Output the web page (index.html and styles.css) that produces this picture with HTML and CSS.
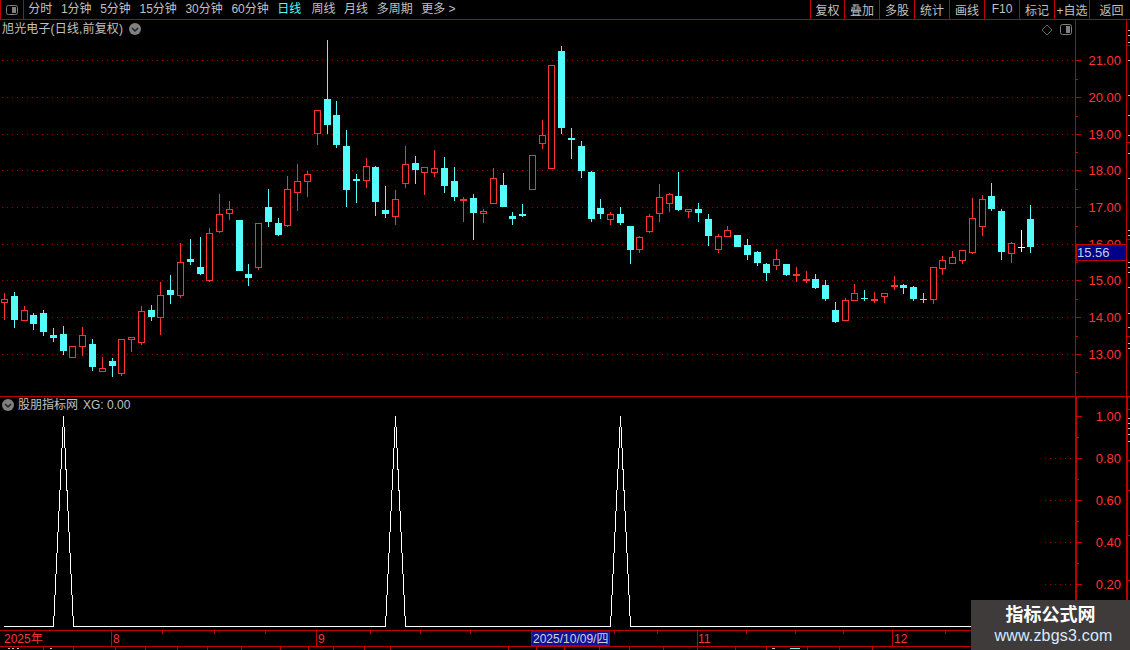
FILE: index.html
```html
<!DOCTYPE html>
<html lang="zh-CN">
<head>
<meta charset="utf-8">
<title>旭光电子 日线</title>
<link rel="stylesheet" href="styles.css">
</head>
<body>
<div class="app">
  <header class="toolbar">
    <div class="tool-icon">
      <svg class="panel-icon" viewBox="0 0 12 10" width="12" height="10"><rect x="0.5" y="0.5" width="11" height="9" rx="2" class="icon-frame"/><rect x="6" y="2" width="4" height="6" class="icon-fill"/></svg>
    </div>
    <nav class="periods">
      <span class="period">分时</span><span class="period">1分钟</span><span class="period">5分钟</span><span class="period">15分钟</span><span class="period">30分钟</span><span class="period">60分钟</span><span class="period active">日线</span><span class="period">周线</span><span class="period">月线</span><span class="period">多周期</span><span class="period">更多 &gt;</span>
    </nav>
    <div class="actions">
      <span class="action first">复权</span><span class="action">叠加</span><span class="action">多股</span><span class="action">统计</span><span class="action">画线</span><span class="action">F10</span><span class="action">标记</span><span class="action">+自选</span><span class="action back">返回</span>
    </div>
  </header>

  <section class="pane price-pane">
    <div class="pane-title price-title">
      <span class="title-text">旭光电子(日线,前复权)</span>
      <svg class="chev" viewBox="0 0 12 12" width="12" height="12"><circle cx="6" cy="6" r="6" class="chev-bg"/><path d="M3 5l3 3 3-3" class="chev-mark"/></svg>
    </div>
    <svg class="chart" viewBox="0 20 1130 376" width="1130" height="376">
      <g class="grid">
        <path d="M2 60.5H1075M2 97.5H1075M2 134.5H1075M2 170.5H1075M2 207.5H1075M2 244.5H1075M2 280.5H1075M2 317.5H1075M2 354.5H1075"/>
      </g>
      <g id="candles"></g>
      <g class="axis">
        <path d="M1075.5 20V396M1126.5 20V396"/>
        <path d="M1076 60.5h5M1076 97.5h5M1076 134.5h5M1076 170.5h5M1076 207.5h5M1076 244.5h5M1076 280.5h5M1076 317.5h5M1076 354.5h5"/>
        <path d="M1076 79.5h2M1076 116.5h2M1076 152.5h2M1076 189.5h2M1076 226.5h2M1076 262.5h2M1076 299.5h2M1076 336.5h2M1076 372.5h2"/>
        <path d="M1127 45.5h3M1127 142.5h3M1127 239.5h3M1127 336.5h3"/>
      </g>
      <path class="strip-ticks" d="M1128 30.500h2M1128 35.500h2M1128 42.500h2M1128 60.500h2M1128 95.500h2M1128 115.500h2M1128 135.500h2M1128 153.500h2M1128 178.500h2M1128 230.500h2M1128 235.500h2M1128 262.500h2M1128 267.500h2M1128 272.500h2M1128 287.500h2M1128 313.500h2M1128 327.500h2M1128 343.500h2M1128 348.500h2"/>
      <g class="labels">
        <text x="1121" y="65">21.00</text>
        <text x="1121" y="102">20.00</text>
        <text x="1121" y="139">19.00</text>
        <text x="1121" y="175">18.00</text>
        <text x="1121" y="212">17.00</text>
        <text x="1121" y="249">16.00</text>
        <text x="1121" y="285">15.00</text>
        <text x="1121" y="322">14.00</text>
        <text x="1121" y="359">13.00</text>
      </g>
      <rect class="tag-bg" x="1076" y="244.500" width="50" height="15.500"/>
      <text class="tag-text" x="1077" y="257">15.56</text>
      <path class="diamond" d="M1047 25l5 5-5 5-5-5z"/>
      <rect class="icon-frame" x="1060.500" y="24.500" width="11" height="10" rx="2"/>
      <rect class="icon-fill" x="1066" y="26" width="4" height="7"/>
    </svg>
  </section>

  <section class="pane ind-pane">
    <div class="pane-title ind-title">
      <svg class="chev" viewBox="0 0 12 12" width="12" height="12"><circle cx="6" cy="6" r="6" class="chev-bg"/><path d="M3 5l3 3 3-3" class="chev-mark"/></svg>
      <span>股朋指标网</span>
      <span>XG: 0.00</span>
    </div>
    <svg class="chart" viewBox="0 397 1130 233" width="1130" height="233">
      <g class="grid">
        <path d="M1045 458.5H1075M1045 500.5H1075M1045 542.5H1075M1045 584.5H1075"/>
      </g>
      <polyline class="signal" points="4,626.500 53.500,626.500 63.500,416.500 73.500,626.500 385.500,626.500 395.500,416.500 405.500,626.500 610.500,626.500 620.500,416.500 630.500,626.500 1030,626.500"/>
      <g class="axis">
        <path class="thick" d="M1076 397V630M1127 397V630"/>
        <path d="M1077 416.500h5M1077 458.500h5M1077 500.500h5M1077 542.500h5M1077 584.500h5"/>
        <path d="M1077 437.500h2M1077 479.500h2M1077 521.500h2M1077 563.500h2"/>
        <path d="M1128 409.500h2M1128 460.500h2M1128 490.500h2M1128 535.500h2M1128 580.500h2"/>
      </g>
      <path class="strip-ticks" d="M1128 418.500h2M1128 423.500h2M1128 428.500h2M1128 434.500h2M1128 441.500h2"/>
      <g class="labels">
        <text x="1121" y="421">1.00</text>
        <text x="1121" y="463">0.80</text>
        <text x="1121" y="505">0.60</text>
        <text x="1121" y="547">0.40</text>
        <text x="1121" y="589">0.20</text>
      </g>
    </svg>
  </section>

  <footer class="time-pane">
    <svg class="chart" viewBox="0 630 1130 20" width="1130" height="20">
      <g class="axis">
        <path d="M0 630.500H1130M0 646.500H1130"/>
        <path d="M111.500 631V646M316.500 631V646M697.500 631V646M892.500 631V646"/>
        <path d="M162.500 631v3M214.500 631v3M265.500 631v3M370.500 631v3M420.500 631v3M470.500 631v3M614.500 631v3M657.500 631v3M746.500 631v3M795.500 631v3M843.500 631v3M945.500 631v3"/>
        <path d="M43.500 647v3M73.500 647v3M115.500 647v3M145.500 647v3M177.500 647v3M207.500 647v3M241.500 647v3M280.500 647v3M308.500 647v3M333.500 647v3M364.500 647v3M390.500 647v3M508.500 647v3M536.500 647v3M564.500 647v3M599.500 647v3M629.500 647v3M663.500 647v3M697.500 647v3M735.500 647v3M766.500 647v3M807.500 647v3M839.500 647v3M872.500 647v3"/>
      </g>
      <g class="date-labels">
        <text x="4" y="643">2025年</text>
        <text x="113" y="643">8</text>
        <text x="318" y="643">9</text>
        <text x="698" y="643">11</text>
        <text x="894" y="643">12</text>
      </g>
      <rect class="date-bg" x="531.500" y="631.500" width="78" height="14"/>
      <text class="date-text" x="533" y="643">2025/10/09/四</text>
      <path class="strip-ticks" d="M8 648.500h2M12 648.500h2M17 648.500h2M50 648.500h2M772 648.500h3"/>
      <path class="strip-cyan" d="M790 648.500h10"/>
    </svg>
  </footer>

  <aside class="watermark">
    <div class="wm-title">指标公式网</div>
    <div class="wm-url">www.zbgs3.com</div>
  </aside>
</div>
<script src="script.js"></script>
</body>
</html>
```

FILE: styles.css
```css
* { box-sizing: border-box; }
html, body { margin: 0; padding: 0; background: #000; }
body { font-family: "Liberation Sans", "Noto Sans CJK SC", sans-serif; font-size: 12px; color: #c0c0c0; }

.app { position: relative; width: 1130px; height: 650px; overflow: hidden; background: #000; display: flex; flex-direction: column; }

.toolbar { display: flex; align-items: stretch; height: 20px; border-bottom: 1px solid #c00000; flex: none; }
.tool-icon { width: 24px; display: flex; align-items: center; justify-content: center; border-left: 1px solid #c00000; border-right: 1px solid #c00000; }
.panel-icon { display: block; }
.periods { display: flex; align-items: center; padding-bottom: 1px; }
.period { padding: 0 4.3px; white-space: nowrap; line-height: 18px; }
.period.active { color: #54fcfc; margin-right: 1.5px; }
.actions { margin-left: auto; display: flex; align-items: stretch; border-left: 1px solid #c00000; }
.action { width: 35px; display: flex; align-items: center; justify-content: center; border-right: 1px solid #c00000; white-space: nowrap; padding-bottom: 1px; }
.action.first { width: 34px; }
.action.back { width: 40px; border-right: 0; padding-left: 3px; }

.pane { position: relative; flex: none; }
.price-pane { height: 377px; border-bottom: 1px solid #c00000; }
.ind-pane { height: 233px; }
.time-pane { height: 20px; flex: none; }
.chart { display: block; }

.pane-title { position: absolute; display: flex; align-items: center; white-space: nowrap; line-height: 16px; }
.price-title { left: 2px; top: 1px; gap: 6px; }
.title-text { letter-spacing: 0.15px; }
.ind-title { left: 2px; top: 0; gap: 4px; }
.ind-title span + span { margin-left: 1px; }
.chev { display: block; }
.chev-bg { fill: #808080; }
.chev-mark { fill: none; stroke: #222; stroke-width: 1.5; }

.icon-frame { fill: none; stroke: #808080; stroke-width: 1; }
.icon-fill { fill: #808080; }
.diamond { fill: none; stroke: #666; stroke-width: 1; }

.grid path { fill: none; stroke: #a00000; stroke-width: 1; stroke-dasharray: 1 4; shape-rendering: crispEdges; }
.axis path { fill: none; stroke: #c00000; stroke-width: 1; shape-rendering: crispEdges; }
.axis path.thick { stroke-width: 2; }
.strip-ticks { fill: none; stroke: #c0c0c0; stroke-width: 1; shape-rendering: crispEdges; }
.strip-cyan { fill: none; stroke: #54fcfc; stroke-width: 1; shape-rendering: crispEdges; }
.labels text { fill: #ff3232; font-size: 13px; text-anchor: end; }
.tag-bg { fill: #000088; stroke: #c00000; stroke-width: 1; shape-rendering: crispEdges; }
.tag-text { fill: #c0d0e8; font-size: 13px; }
.signal { fill: none; stroke: #fff; stroke-width: 1; shape-rendering: crispEdges; }

.date-labels text { fill: #ff3232; font-size: 12px; font-family: "Liberation Sans", "Noto Sans CJK SC", sans-serif; }
.date-bg { fill: #10109a; stroke: #2020c0; stroke-width: 1; shape-rendering: crispEdges; }
.date-text { fill: #d0d0d0; font-size: 12px; }

.wick { stroke-width: 1; shape-rendering: crispEdges; fill: none; }
.wick.r, .hollow { stroke: #ff3232; }
.wick.c { stroke: #54fcfc; }
.wick.w { stroke: #fff; }
.hollow { fill: #000; stroke-width: 1; shape-rendering: crispEdges; }
.solid { shape-rendering: crispEdges; }
.solid.c { fill: #54fcfc; }
.solid.r { fill: #ff3232; }
.solid.w { fill: #fff; }

.watermark { position: absolute; right: 0; bottom: 0; width: 159px; height: 50px; background: #3f3b3b; display: flex; flex-direction: column; align-items: center; padding-top: 4px; }
.wm-title { color: #fff; font-size: 18px; font-weight: 700; line-height: 22px; }
.wm-url { color: #d4ebff; font-size: 16px; line-height: 20px; letter-spacing: 0.2px; padding-left: 6px; }
```

FILE: script.js
```js
// [high, low, bodyTop, bodyBottom, type] r = hollow red, c = solid cyan, f = solid red flat, w = white flat
var candles = [
[293,320,299,303,'r'],[292,328,296,320,'c'],[306,321,310,321,'r'],[313,330,315,324,'c'],[310,336,313,332,'c'],
[328,342,335,338,'c'],[326,355,334,351,'c'],[346,358,346,358,'r'],[327,356,335,347,'r'],[339,371,344,367,'c'],
[357,372,368,372,'r'],[358,377,361,366,'c'],[339,376,339,374,'r'],[337,352,337,340,'r'],[306,345,311,343,'r'],
[305,321,310,317,'c'],[282,335,295,318,'r'],[275,304,290,295,'c'],[243,298,262,296,'r'],[239,265,259,262,'c'],
[237,275,267,274,'c'],[228,282,233,281,'r'],[194,233,214,232,'r'],[201,220,209,214,'r'],[220,271,220,271,'c'],
[264,286,274,278,'c'],[223,270,223,268,'r'],[189,227,207,222,'c'],[218,236,223,235,'c'],[176,227,189,226,'r'],
[164,211,181,193,'r'],[171,197,174,182,'r'],[110,145,110,134,'r'],[40,134,99,125,'c'],[101,148,115,145,'c'],
[130,207,146,190,'c'],[174,203,179,181,'c'],[158,188,166,181,'r'],[166,216,167,202,'c'],[186,218,210,214,'c'],
[190,225,199,217,'r'],[146,188,164,184,'r'],[156,184,163,170,'c'],[167,195,167,173,'r'],[150,177,168,173,'r'],
[157,193,168,186,'c'],[167,201,181,197,'c'],[197,222,199,201,'f'],[194,240,198,213,'c'],[209,223,211,214,'r'],
[168,204,178,204,'r'],[173,207,185,207,'c'],[212,225,216,219,'c'],[204,217,214,216,'c'],[155,190,155,190,'r'],
[120,149,135,144,'r'],[65,169,65,169,'r'],[46,134,51,128,'c'],[128,159,138,140,'c'],[141,178,146,171,'c'],
[171,222,172,219,'c'],[199,219,208,214,'c'],[212,225,214,220,'r'],[207,225,214,223,'c'],[226,264,226,250,'c'],
[236,253,237,250,'r'],[214,233,216,232,'r'],[184,222,197,214,'r'],[193,212,194,204,'r'],[172,211,196,210,'c'],
[209,218,209,212,'r'],[203,222,209,213,'c'],[214,246,219,236,'c'],[234,253,236,250,'r'],[226,237,230,237,'r'],
[235,247,235,247,'c'],[239,260,245,255,'c'],[251,266,252,263,'c'],[263,281,264,273,'c'],[249,270,259,266,'r'],
[264,276,264,275,'c'],[267,282,274,276,'f'],[271,283,279,281,'f'],[274,289,279,288,'c'],[280,301,285,299,'c'],
[302,323,310,322,'c'],[298,321,300,321,'r'],[284,301,293,301,'r'],[290,301,298,299,'c'],[292,303,299,301,'f'],
[293,303,293,297,'r'],[276,290,285,287,'f'],[284,294,285,288,'c'],[286,301,287,299,'c'],[293,303,299,300,'c'],
[267,304,267,300,'r'],[256,275,260,269,'r'],[251,264,257,264,'r'],[250,264,250,261,'r'],[198,254,218,253,'r'],
[195,236,199,227,'r'],[183,211,196,209,'c'],[209,260,211,252,'c'],[242,263,243,254,'r'],[230,252,247,248,'w'],
[205,253,219,247,'c']
];

var NS = 'http://www.w3.org/2000/svg';
var layer = document.getElementById('candles');

function add(tag, attrs) {
  var el = document.createElementNS(NS, tag);
  for (var k in attrs) el.setAttribute(k, attrs[k]);
  layer.appendChild(el);
}

candles.forEach(function (c, i) {
  var px = Math.floor(4.5 + 9.775 * i);
  var hi = c[0], lo = c[1], top = c[2], bot = c[3], t = c[4];
  var colour = t === 'f' ? 'r' : t;
  add('path', { 'class': 'wick ' + colour, d: 'M' + (px + 0.5) + ' ' + hi + 'V' + lo });
  if (t === 'r') {
    add('rect', { 'class': 'hollow', x: px - 2.5, y: top + 0.5, width: 6, height: Math.max(bot - top - 1, 1) });
  } else {
    add('rect', { 'class': 'solid ' + colour, x: px - 3, y: top, width: 7, height: bot - top });
  }
});
```
